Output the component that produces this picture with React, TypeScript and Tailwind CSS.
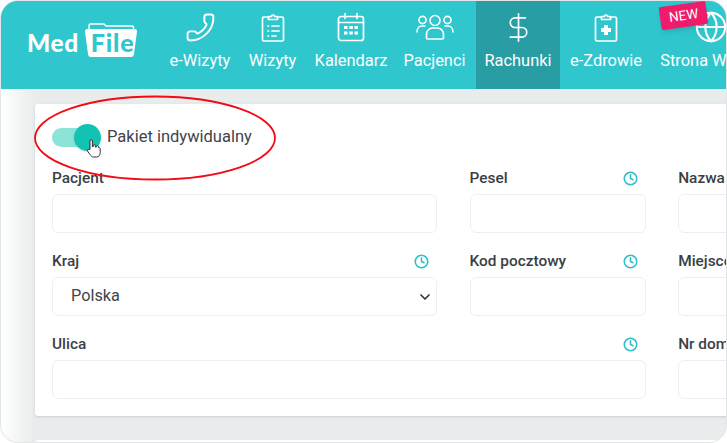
import React from 'react';
import { Phone, DollarSign, Globe, Clock, ChevronDown } from 'lucide-react';

const IconUsers = () => (
    <svg width="38" height="30" viewBox="0 0 38 30" fill="none" stroke="currentColor" strokeWidth="1.6" strokeLinecap="round" strokeLinejoin="round">
        <circle cx="19" cy="8.5" r="5" />
        <circle cx="6.5" cy="8" r="3.6" />
        <circle cx="31.5" cy="8" r="3.6" />
        <path d="M10.500 26v-3.500c0-4 3-6.500 6-6.500h5c3 0 6 2.500 6 6.500V26c0 .6-.4 1-1 1H11.500c-.6 0-1-.4-1-1z" />
        <path d="M1 20c0-3.500 2-6 5-6h3" />
        <path d="M37 20c0-3.500-2-6-5-6h-3" />
    </svg>
);

const IconClipboard = () => (
    <svg width="24" height="30" viewBox="0 0 24 30" fill="none" stroke="currentColor" strokeWidth="1.7" strokeLinecap="round" strokeLinejoin="round">
        <path d="M7.500 5H3a1.500 1.500 0 0 0-1.500 1.500v21A1.500 1.500 0 0 0 3 29h18a1.500 1.500 0 0 0 1.500-1.500v-21A1.500 1.500 0 0 0 21 5h-4.500" />
        <path d="M7.500 7.500V4.500h3a1.500 1.500 0 0 1 3 0h3v3z" />
        <path d="M7 14h.5M11 14h7M7 19h.5M11 19h7M7 24h.5M11 24h4" />
    </svg>
);

const IconClipboardPlus = () => (
    <svg width="24" height="30" viewBox="0 0 24 30" fill="none" stroke="currentColor" strokeWidth="1.7" strokeLinejoin="round">
        <path d="M7.500 5H3a1.500 1.500 0 0 0-1.500 1.500v21A1.500 1.500 0 0 0 3 29h18a1.500 1.500 0 0 0 1.500-1.500v-21A1.500 1.500 0 0 0 21 5h-4.500" />
        <path d="M7.500 7.500V4.500h3a1.500 1.500 0 0 1 3 0h3v3z" />
        <path d="M10 13h4v3h3v4h-3v3h-4v-3H7v-4h3z" fill="currentColor" stroke="none" />
    </svg>
);

const IconCalendar = () => (
    <svg width="28" height="30" viewBox="0 0 28 30" fill="none" stroke="currentColor" strokeWidth="1.7" strokeLinecap="round" strokeLinejoin="round">
        <rect x="1.500" y="4.500" width="25" height="24" rx="2.500" />
        <path d="M1.500 10.500h25M8 1.500v5M20 1.500v5" />
        <g fill="currentColor" stroke="none">
            <rect x="7" y="14" width="3.500" height="3" />
            <rect x="12.300" y="14" width="3.500" height="3" />
            <rect x="17.500" y="14" width="3.500" height="3" />
            <rect x="7" y="19.500" width="3.500" height="3" />
            <rect x="12.300" y="19.500" width="3.500" height="3" />
            <rect x="17.500" y="19.500" width="3.500" height="3" />
        </g>
    </svg>
);

const HandCursor = () => (
    <svg width="16" height="21" viewBox="0 0 16 20" fill="#fff" stroke="#333" strokeWidth="1" strokeLinejoin="round">
        <path d="M4 11V2.500a1.200 1.200 0 0 1 2.400 0V8l1 .1V7.200a1 1 0 0 1 2 0V8.500l1 .1V8a1 1 0 0 1 2 0v1l.8.200a.9.9 0 0 1 1 .9V14c0 2.500-1.500 4.500-3.500 4.500H7.500C6 18.500 5 17.500 4 16L1.500 12.500c-.7-1 .5-2.200 1.500-1.500z" />
    </svg>
);

const Logo = () => (
    <div className="flex items-end ml-[26px] shrink-0">
        <span className="text-white font-black text-[24.500px] leading-[26px] mb-[1px] font-['Lato',sans-serif] tracking-[0.6px]">Med</span>
        <div className="relative ml-[5px] w-[54px] h-[34px]">
            <svg className="absolute inset-0" width="54" height="34" viewBox="0 0 54 34" fill="none">
                <path d="M5 7V2.500a1.500 1.500 0 0 1 1.500-1.500H20l2 2h26a1.500 1.500 0 0 1 1.500 1.500V7" stroke="#fff" strokeWidth="1.500" />
                <path d="M1 8.500C1 6.500 2 6 4 6h46c2 0 3 .5 3 2.500L50 31c-.2 2-1 3-3 3H7c-2 0-2.800-1-3-3z" fill="#fff" />
            </svg>
            <span className="absolute left-[7px] top-[6px] text-[#30c6cd] font-black text-[25px] leading-[26px] font-['Lato',sans-serif] tracking-[0.8px]">File</span>
        </div>
    </div>
);

const navItems = [
    { label: 'e-Wizyty', icon: <Phone size={31} strokeWidth={1.5} className="-scale-x-100" />, width: 'w-[72px]' },
    { label: 'Wizyty', icon: <IconClipboard />, width: 'w-[73px]' },
    { label: 'Kalendarz', icon: <IconCalendar />, width: 'w-[84px]' },
    { label: 'Pacjenci', icon: <IconUsers />, width: 'w-[83px]' },
    { label: 'Rachunki', icon: <DollarSign size={33} strokeWidth={1.2} />, width: 'w-[84px]', active: true },
    { label: 'e-Zdrowie', icon: <IconClipboardPlus />, width: 'w-[92px]' },
    { label: 'Strona WWW', icon: <Globe size={34} strokeWidth={1.5} className="ml-[6px]" />, width: 'w-[112px]', isNew: true },
];

const Field = ({ label, clock, className, children }: { label: string; clock?: boolean; className?: string; children?: React.ReactNode }) => (
    <div className={className}>
        <div className="flex items-center justify-between h-[17px] mb-[7px]">
            <span className="text-[15.400px] font-medium text-[#3a3f47] leading-[17px] whitespace-nowrap">{label}</span>
            {clock && <Clock size={15} strokeWidth={2.5} className="text-[#2ec0c8] mr-[8px]" />}
        </div>
        <div className="h-[39px] rounded-[6px] border border-[#eceef3] bg-white flex items-center justify-between pl-[18px] pr-[3px] text-[16.300px] text-[#3f444b]">
            {children}
        </div>
    </div>
);

export default function App() {
    return (
        <div className="relative w-[727px] h-[443px] overflow-hidden rounded-[18px] border border-[#e3e6e6] bg-[#e9ecec] font-['Roboto',sans-serif]">
            <nav className="flex items-stretch h-[88px] bg-[#30c6cd] text-white">
                <div className="w-[166px] flex items-end shrink-0 pb-[32px]">
                    <Logo />
                </div>
                <div className="flex -ml-[3px]">
                    {navItems.map((item) => (
                        <div key={item.label} className={`relative flex flex-col items-center shrink-0 ${item.width} ${item.active ? 'bg-[#289da3]' : ''}`}>
                            <div className="h-[30px] mt-[11px] flex items-center justify-center">{item.icon}</div>
                            <span className="mt-[9px] text-[16.400px] leading-[20px] whitespace-nowrap">{item.label}</span>
                            {item.isNew && (
                                <span className="absolute left-[8px] top-[3px] -rotate-[8deg] bg-[#ee1c6a] text-white text-[13.500px] leading-[23px] px-[9px] rounded-[2px] shadow-md">NEW</span>
                            )}
                        </div>
                    ))}
                </div>
            </nav>

            <div className="absolute left-0 top-[88px] bottom-0 w-[34px] bg-gradient-to-r from-white to-[#e9ecec]" />

            <main className="relative ml-[34px] mt-[15px]">
                <section className="w-[760px] h-[312px] bg-white rounded-[3px] shadow-sm pl-[17px]">
                    <div className="flex items-center h-[66px]">
                        <div className="relative w-[48px] h-[19px] rounded-full bg-[#8de3d8]">
                            <div className="absolute -right-[1px] -top-[4px] w-[27px] h-[27px] rounded-full bg-[#12c2b2] shadow" />
                        </div>
                        <span className="ml-[7px] text-[16.500px] text-[#3f444b]">Pakiet indywidualny</span>
                    </div>
                    <div className="grid grid-cols-[385px_176px_176px] gap-x-[32.600px] gap-y-[20px]">
                        <Field label="Pacjent" />
                        <Field label="Pesel" clock />
                        <Field label="Nazwa" />
                        <Field label="Kraj" clock>
                            <span>Polska</span>
                            <ChevronDown size={16} strokeWidth={2.5} className="text-[#333]" />
                        </Field>
                        <Field label="Kod pocztowy" clock />
                        <Field label="Miejscowość" />
                        <Field label="Ulica" clock className="col-span-2" />
                        <Field label="Nr domu" />
                    </div>
                </section>
                <section className="w-[760px] h-[40px] bg-white rounded-[3px] mt-[24px]" />
            </main>

            <svg className="absolute left-[33px] top-[94px] pointer-events-none" width="244" height="88" viewBox="0 0 244 88" fill="none">
                <ellipse cx="121" cy="43" rx="120" ry="41.500" stroke="#f20a14" strokeWidth="1.800" />
            </svg>
            <div className="absolute left-[85px] top-[137px] pointer-events-none">
                <HandCursor />
            </div>
        </div>
    );
}
